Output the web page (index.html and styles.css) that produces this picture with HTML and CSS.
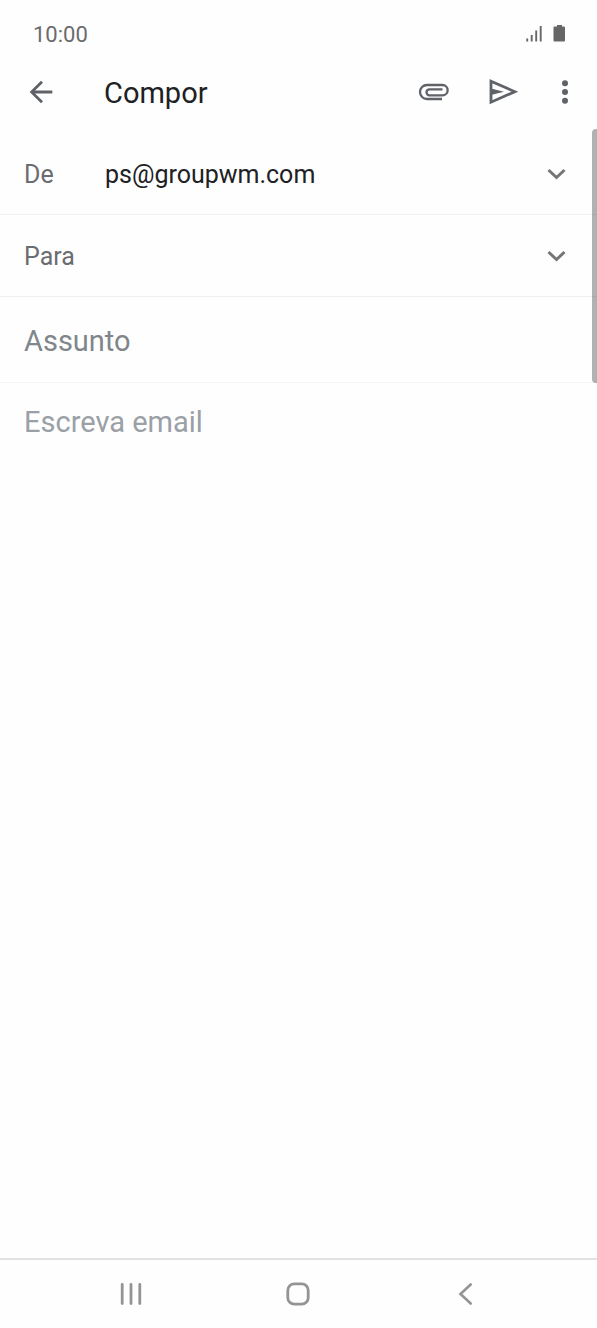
FILE: index.html
```html
<!DOCTYPE html>
<html lang="pt">
<head>
<meta charset="utf-8">
<meta name="viewport" content="width=device-width, initial-scale=1">
<title>Compor</title>
<link rel="stylesheet" href="styles.css">
</head>
<body>
<div class="screen">
  <div class="status-bar">
    <time class="clock">10:00</time>
    <svg class="status-icons" width="40" height="20" viewBox="0 1 40 20" aria-hidden="true">
      <path d="M1.200 17.500v-3M5.700 17.500V11M10.200 17.500V6.500M14.700 17.500V2" fill="none" stroke="#666" stroke-width="1.900"/>
      <path d="M31 1h5v1.500h2a1 1 0 0 1 1 1V16.500a1 1 0 0 1-1 1h-9.500a1 1 0 0 1-1-1V3.500a1 1 0 0 1 1-1H31z" fill="#666"/>
    </svg>
  </div>

  <header class="app-bar">
    <button class="icon-button" type="button" aria-label="Voltar">
      <svg width="34" height="34" viewBox="0 0 24 24"><path d="M20 11H7.830l5.590-5.590L12 4l-8 8 8 8 1.410-1.410L7.830 13H20z" fill="#5f6368"/></svg>
    </button>
    <h1 class="title">Compor</h1>
    <div class="actions">
      <button class="icon-button" type="button" aria-label="Anexar">
        <svg width="32" height="32" viewBox="0 0 32 32"><path d="M24 23H9a7 7 0 0 1 0-14H24.500a5 5 0 0 1 0 10.300H11.500a3 3 0 0 1 0-6H24.500" fill="none" stroke="#5f6368" stroke-width="2.300"/></svg>
      </button>
      <button class="icon-button" type="button" aria-label="Enviar">
        <svg width="32" height="32" viewBox="0 0 32 32"><path d="M3 5.200 26.800 15.700 3 26.200z" fill="none" stroke="#5f6368" stroke-width="2.800"/><path d="M3 12.500 16 15.700 3 18.900z" fill="#5f6368"/></svg>
      </button>
    </div>
    <button class="icon-button" type="button" aria-label="Mais opções">
      <svg width="8" height="32" viewBox="0 0 8 32" fill="#5f6368"><circle cx="4" cy="7.300" r="3"/><circle cx="4" cy="16" r="3"/><circle cx="4" cy="24.700" r="3"/></svg>
    </button>
  </header>

  <form class="compose">
    <div class="row">
      <label class="label" for="from">De</label>
      <input class="field" id="from" type="email" value="ps@groupwm.com">
      <button class="icon-button" type="button" aria-label="Escolher remetente">
        <svg width="20" height="20" viewBox="0 0 20 20"><path d="M2.500 5 10.500 12.500 18.500 5" fill="none" stroke="#757575" stroke-width="3"/></svg>
      </button>
    </div>
    <div class="row">
      <label class="label" for="to">Para</label>
      <input class="field" id="to" type="email">
      <button class="icon-button" type="button" aria-label="Mostrar Cc e Bcc">
        <svg width="20" height="20" viewBox="0 0 20 20"><path d="M2.500 5 10.500 12.500 18.500 5" fill="none" stroke="#757575" stroke-width="3"/></svg>
      </button>
    </div>
    <div class="row row-subject">
      <input class="field field-subject" type="text" placeholder="Assunto" aria-label="Assunto">
    </div>
    <textarea class="message" placeholder="Escreva email" aria-label="Escreva email"></textarea>
    <div class="scrollbar"></div>
  </form>

  <nav class="nav-bar">
    <button class="icon-button" type="button" aria-label="Recentes">
      <svg width="28" height="28" viewBox="0 0 28 28"><path d="M5.200 4.500v19M14 4.500v19M22.800 4.500v19" fill="none" stroke="#949494" stroke-width="2.800" stroke-linecap="round"/></svg>
    </button>
    <button class="icon-button" type="button" aria-label="Início">
      <svg width="28" height="28" viewBox="0 0 28 28"><rect x="3.800" y="3.800" width="20.400" height="20.400" rx="6.500" fill="none" stroke="#949494" stroke-width="2.800"/></svg>
    </button>
    <button class="icon-button" type="button" aria-label="Voltar">
      <svg width="28" height="28" viewBox="0 0 28 28"><path d="M19.700 4.500 9.500 14l10.200 9.500" fill="none" stroke="#949494" stroke-width="2.600" stroke-linecap="round"/></svg>
    </button>
  </nav>
</div>
</body>
</html>
```
FILE: styles.css
```css
* {
  box-sizing: border-box;
}

body {
  margin: 0;
  background: #fefefe;
  color: #202124;
  font-family: Roboto, "Liberation Sans", sans-serif;
}

.screen {
  display: flex;
  flex-direction: column;
  min-height: 100vh;
}

.status-bar {
  display: flex;
  align-items: center;
  justify-content: space-between;
  height: 68px;
  padding: 2px 31px 0 33px;
}

.clock {
  color: #6b6b6b;
  font-size: 22px;
  line-height: 28px;
}

.icon-button {
  display: flex;
  flex: none;
  padding: 0;
  border: 0;
  background: none;
  cursor: pointer;
}

.app-bar {
  display: flex;
  align-items: center;
  height: 48px;
  padding: 0 28px 0 24px;
}

.title {
  flex: 1;
  margin: 0;
  padding: 2px 0 0 46px;
  font-size: 29px;
  font-weight: 400;
  line-height: 40px;
}

.actions {
  display: flex;
  align-items: center;
  gap: 38px;
  margin-right: 41px;
}

.compose {
  position: relative;
  display: flex;
  flex: 1;
  flex-direction: column;
  padding-top: 17px;
}

.row {
  display: flex;
  align-items: center;
  height: 82px;
  padding: 2px 31px 0 24px;
  border-bottom: 1px solid #f0f0f1;
}

.row-subject {
  height: 86px;
  border-bottom-color: #f5f5f6;
}

.label {
  width: 81px;
  color: #6b6c70;
  font-size: 25px;
  line-height: 32px;
}

.field {
  flex: 1;
  min-width: 0;
  padding: 0;
  border: 0;
  outline: 0;
  background: none;
  color: inherit;
  font-family: inherit;
  font-size: 25px;
  line-height: 32px;
}

.field-subject {
  font-size: 29px;
}

.field-subject::placeholder {
  color: #80868b;
  opacity: 1;
}

.message {
  flex: 1;
  padding: 19px 24px;
  border: 0;
  outline: 0;
  background: none;
  color: inherit;
  font-family: inherit;
  font-size: 29px;
  line-height: 40px;
  resize: none;
}

.message::placeholder {
  color: #9aa0a6;
  opacity: 1;
}

.scrollbar {
  position: absolute;
  top: 13px;
  right: 0;
  width: 5px;
  height: 254px;
  border-radius: 4px 0 0 4px;
  background: rgba(0, 0, 0, 0.3);
}

.nav-bar {
  display: flex;
  align-items: center;
  justify-content: center;
  gap: 139px;
  height: 70px;
  padding-right: 1px;
  border-top: 2px solid #e2e2e2;
}
```
